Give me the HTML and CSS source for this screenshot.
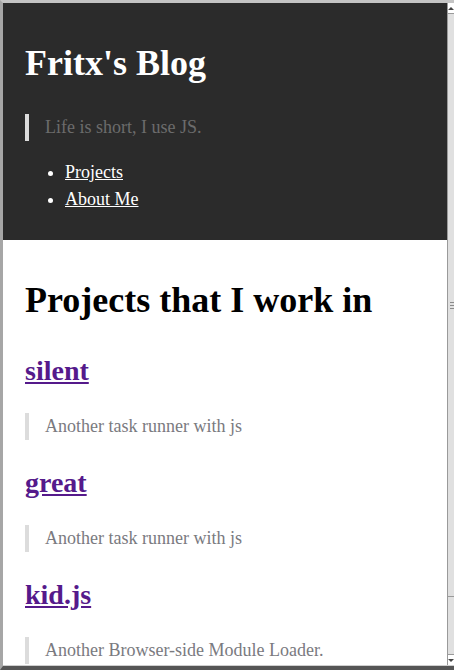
FILE: index.html
```html
<!DOCTYPE html>
<html lang="en">
<head>
<meta charset="utf-8">
<title>Fritx's Blog</title>
<link rel="stylesheet" href="styles.css">
</head>
<body>
<div class="window">
  <div class="viewport">
    <div class="page">
      <header class="site-header">
        <h1 class="site-title">Fritx's Blog</h1>
        <blockquote class="quote quote-dark">Life is short, I use JS.</blockquote>
        <ul class="nav">
          <li><a href="#projects">Projects</a></li>
          <li><a href="#about">About Me</a></li>
        </ul>
      </header>
      <main class="content" id="projects">
        <h1 class="page-title">Projects that I work in</h1>
        <h2 class="project"><a href="#silent">silent</a></h2>
        <blockquote class="quote">Another task runner with js</blockquote>
        <h2 class="project"><a href="#great">great</a></h2>
        <blockquote class="quote">Another task runner with js</blockquote>
        <h2 class="project"><a href="#kid">kid.js</a></h2>
        <blockquote class="quote">Another Browser-side Module Loader.</blockquote>
      </main>
    </div>
    <div class="scrollbar">
      <div class="sb-btn sb-up"><span class="arrow-up"></span></div>
      <div class="sb-thumb">
        <span class="grip"></span>
        <span class="grip"></span>
        <span class="grip"></span>
      </div>
      <div class="sb-track"></div>
      <div class="sb-btn sb-down"><span class="arrow-down"></span></div>
    </div>
  </div>
</div>
</body>
</html>
```

FILE: styles.css
```css
* { box-sizing: border-box; }

html, body {
  margin: 0;
  padding: 0;
  background: #5a5a5a;
}

body {
  font-family: "Liberation Serif", "Times New Roman", serif;
  font-size: 18px;
  line-height: 27px;
}

.window {
  width: 454px;
  height: 670px;
  border-top: 3px solid #c4c4c4;
  border-left: 3px solid #a6a6a6;
  border-bottom: 4px solid #555;
  background: #fff;
  overflow: hidden;
}

.viewport {
  display: flex;
  height: 663px;
  border-bottom: 1px solid #cfcfcf;
  overflow: hidden;
}

.page {
  width: 444px;
  flex: none;
  overflow: hidden;
  background: #fff;
}

.site-header {
  background: #2b2b2b;
  padding: 33px 22px 27px;
}

.site-title {
  margin: 0;
  font-size: 36px;
  line-height: 54px;
  font-weight: bold;
  color: #fff;
}

.quote {
  margin: 21.5px 0;
  padding-left: 16px;
  border-left: 4px solid #dcdcdc;
  color: #7a7a80;
  font-size: 18px;
  line-height: 27px;
}

.quote-dark {
  margin: 24px 0 0;
  color: #6c6c6c;
}

.nav {
  margin: 18px 0 0;
  padding-left: 40px;
  color: #fff;
}

.nav a {
  color: #fff;
  text-decoration: underline;
}

.content {
  padding: 33px 22px 0;
}

.page-title {
  margin: 0 0 22.5px;
  font-size: 36px;
  line-height: 54px;
  font-weight: bold;
  color: #000;
}

.project {
  margin: 0;
  font-size: 28px;
  line-height: 42px;
  font-weight: bold;
}

.project a {
  color: #551a8b;
  text-decoration: underline;
}

.scrollbar {
  width: 7px;
  flex: none;
  display: flex;
  flex-direction: column;
  background: #dedede;
  border-left: 1px solid #9a9a9a;
}

.sb-btn {
  height: 11px;
  flex: none;
  background: #fff;
  display: flex;
  align-items: center;
  justify-content: center;
}

.sb-up { border-bottom: 1px solid #9a9a9a; }
.sb-down { border-top: 1px solid #9a9a9a; }

.arrow-up {
  width: 0;
  height: 0;
  border-left: 3px solid transparent;
  border-right: 3px solid transparent;
  border-bottom: 3px solid #444;
}

.arrow-down {
  width: 0;
  height: 0;
  border-left: 3px solid transparent;
  border-right: 3px solid transparent;
  border-top: 3px solid #444;
}

.sb-thumb {
  height: 583px;
  flex: none;
  background: #e0e0e0;
  border-bottom: 1px solid #9a9a9a;
  display: flex;
  flex-direction: column;
  align-items: flex-end;
  justify-content: center;
  gap: 2px;
}

.grip {
  display: block;
  width: 4px;
  height: 1px;
  background: #8a8a8a;
}

.sb-track {
  flex: 1;
  background: #e0e0e0;
}
```
